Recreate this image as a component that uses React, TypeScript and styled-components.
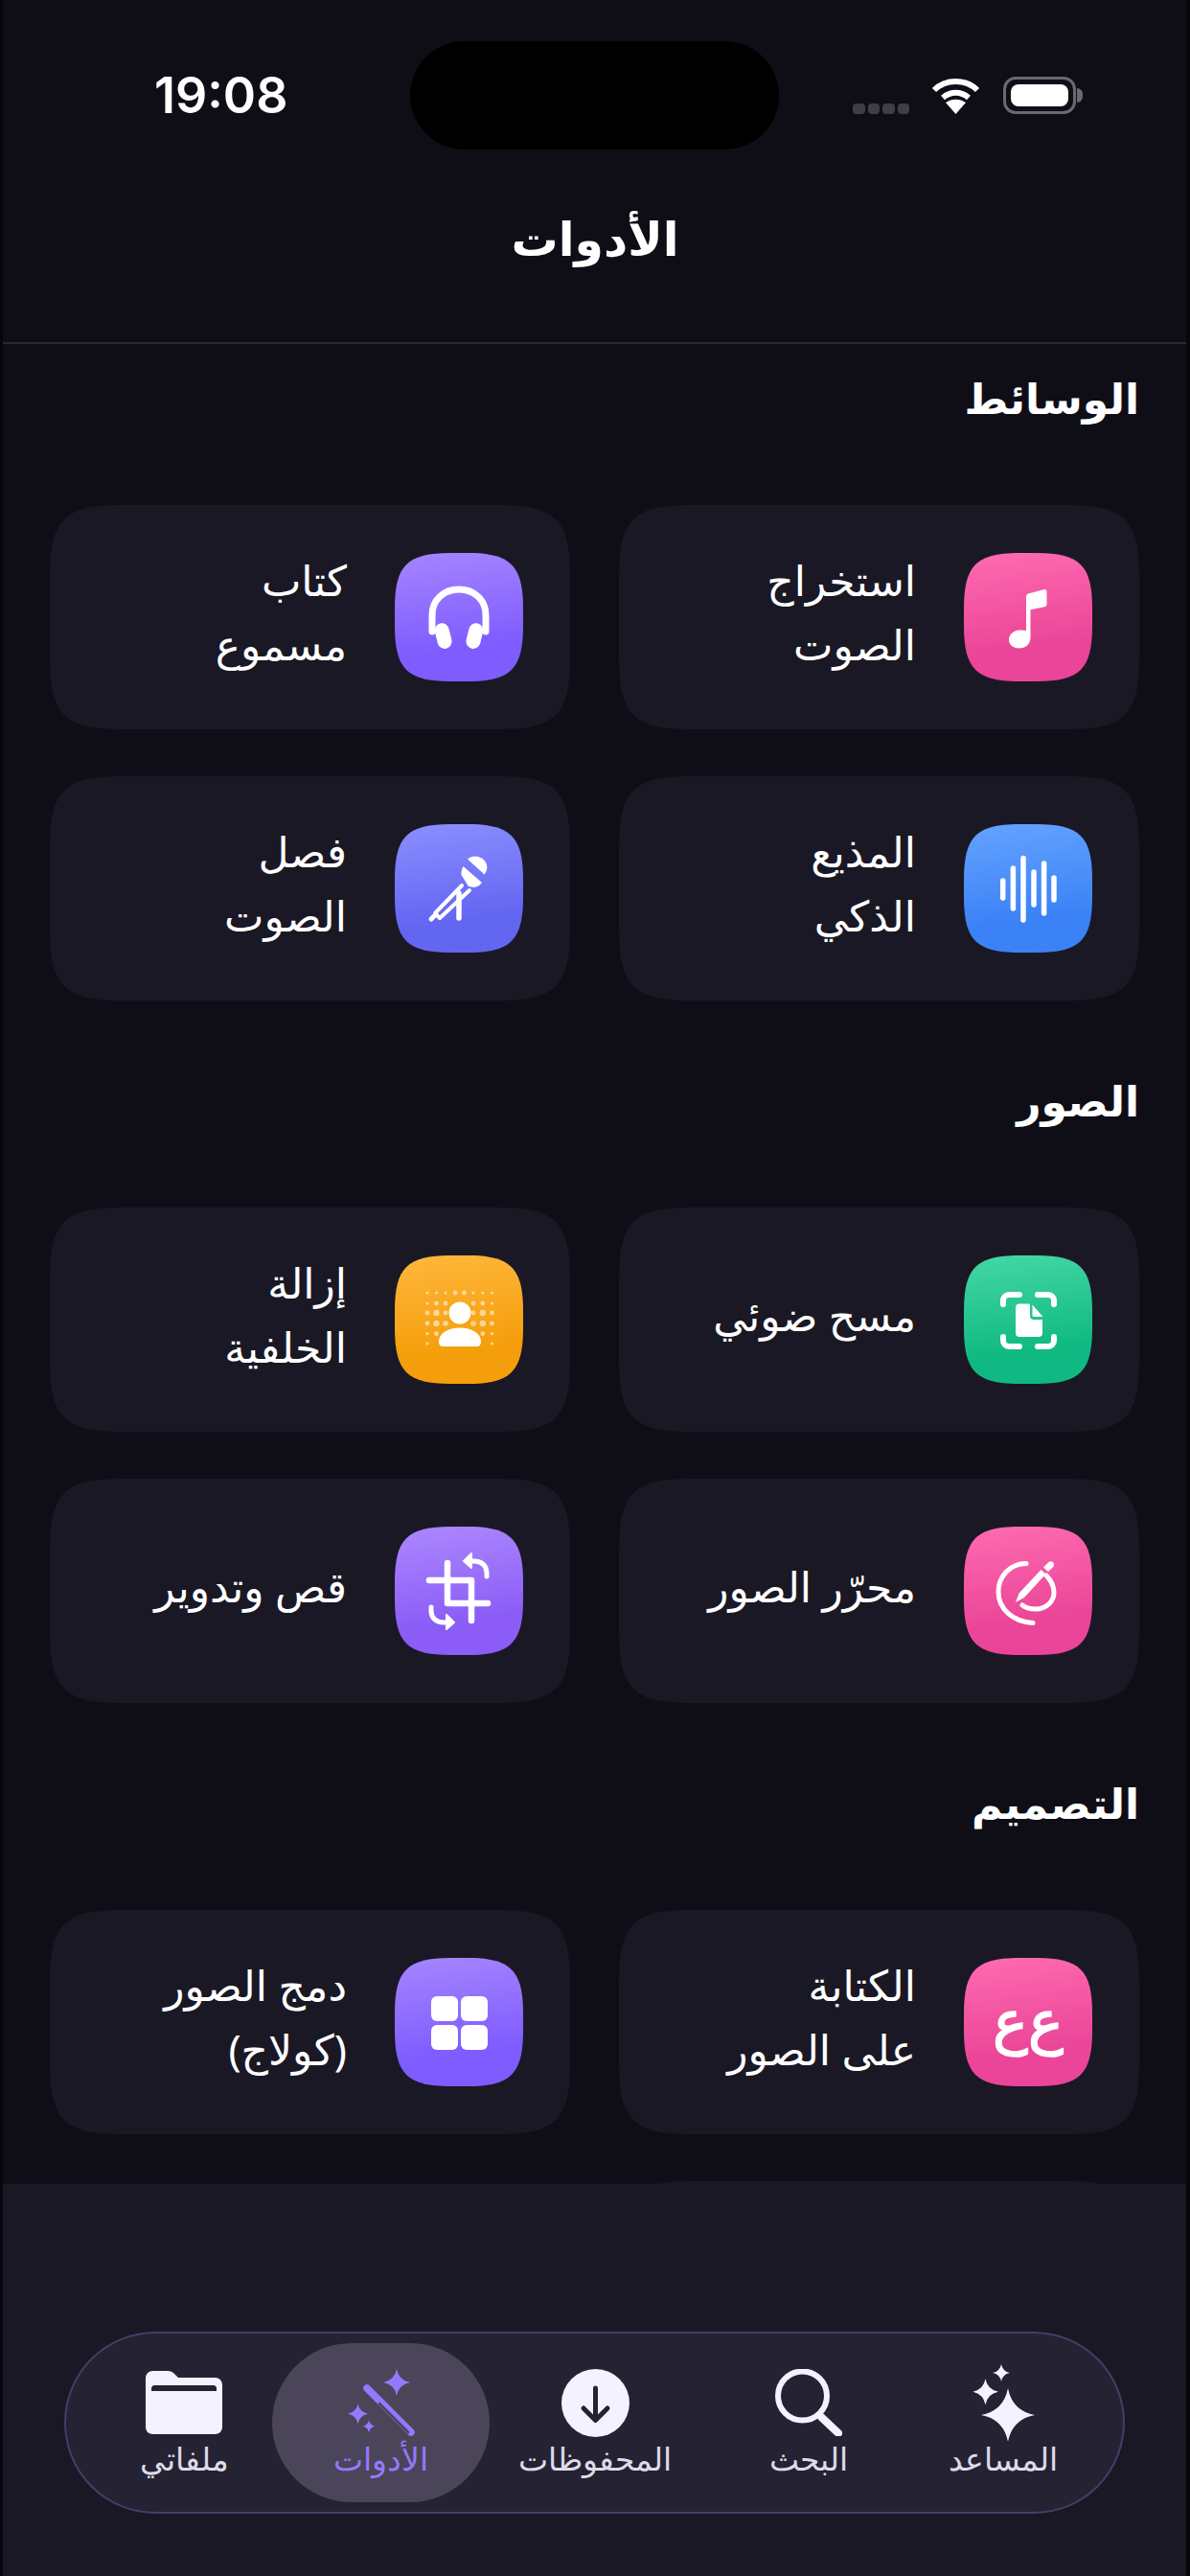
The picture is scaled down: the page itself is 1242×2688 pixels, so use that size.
import { createGlobalStyle, styled } from "styled-components";
import type { ReactNode } from "react";

const GlobalStyle = createGlobalStyle`
  html, body {
    margin: 0;
    padding: 0;
    background: #0f0e17;
  }
  * {
    box-sizing: border-box;
  }
`;

const Screen = styled.div`
  position: relative;
  width: 1242px;
  height: 2688px;
  overflow: hidden;
  background: #0f0e17;
  color: #ffffff;
  font-family: "Noto Sans", "DejaVu Sans", sans-serif;

  /* thin dark rim down both sides of the display */
  &::after {
    content: "";
    position: absolute;
    inset: 0;
    border-left: 3px solid #07070b;
    border-right: 4px solid #07070b;
    pointer-events: none;
  }
`;

const StatusBar = styled.div`
  direction: ltr;
  display: flex;
  align-items: center;
  height: 156px;
  padding: 43px 119px 0 161px;
`;

const Clock = styled.div`
  width: 138px;
  font-family: Inter, sans-serif;
  font-size: 52px;
  font-weight: 600;
  line-height: 113px;
  white-space: nowrap;
`;

const Island = styled.div`
  width: 385px;
  height: 113px;
  margin-left: 129px;
  border-radius: 57px;
  background: #000000;
`;

const StatusIcons = styled.div`
  display: flex;
  align-items: flex-end;
  height: 39px;
  margin-left: auto;
`;

const SignalDots = styled.div`
  display: flex;
  gap: 3px;
  margin-right: 23px;
`;

const SignalDot = styled.span`
  width: 12.5px;
  height: 11px;
  border-radius: 4px;
  background: #3e3d49;
`;

const Battery = styled.div`
  position: relative;
  width: 76px;
  height: 39px;
  margin-left: 24px;
  padding: 5px;
  border: 3px solid #6a6971;
  border-radius: 13px;

  &::before {
    content: "";
    display: block;
    height: 100%;
    border-radius: 8px;
    background: #ffffff;
  }

  &::after {
    content: "";
    position: absolute;
    top: 9px;
    right: -10px;
    width: 6px;
    height: 15px;
    border-radius: 0 6px 6px 0;
    background: #6a6971;
  }
`;

const TitleBar = styled.header`
  display: flex;
  align-items: center;
  justify-content: center;
  height: 203px;
  border-bottom: 2px solid #2a2833;
`;

const Title = styled.h1`
  margin: 0 0 17px;
  font-size: 49px;
  font-weight: 700;
`;

const Content = styled.main`
  padding: 26px 53px 0;
`;

const Section = styled.section`
  & + & {
    margin-top: 74px;
  }
`;

const SectionHeading = styled.h2`
  margin: 0 0 82px;
  font-size: 44px;
  font-weight: 700;
  line-height: 60px;
`;

const ToolGrid = styled.div`
  display: grid;
  grid-template-columns: 543px 543px;
  gap: 49px 51px;
`;

const ToolCard = styled.div`
  display: flex;
  align-items: center;
  gap: 50px;
  height: 234px;
  padding: 0 49px;
  background: #1a1825;
  clip-path: path("M0 75C0 15 15 0 75 0H468C528 0 543 15 543 75V159C543 219 528 234 468 234H75C15 234 0 219 0 159Z");
`;

const ToolTile = styled.div<{ $from: string; $to: string }>`
  flex: none;
  width: 134px;
  height: 134px;
  background: linear-gradient(172deg, ${(p) => p.$from} 0%, ${(p) => p.$to} 72%);
  clip-path: path("M0 58C0 13 13 0 58 0H76C121 0 134 13 134 58V76C134 121 121 134 76 134H58C13 134 0 121 0 76Z");

  svg {
    display: block;
  }
`;

const ToolName = styled.div`
  margin-bottom: 10px;
  font-size: 44px;
  line-height: 67px;
  white-space: pre-line;
`;

const TabArea = styled.div`
  position: absolute;
  left: 0;
  right: 0;
  bottom: 0;
  height: 409px;
  padding: 154px 68px 0 67px;
  background: #1a1824;
`;

const TabBar = styled.nav`
  display: flex;
  align-items: center;
  height: 190px;
  padding: 0 35px 0 31px;
  border: 2px solid #443e66;
  border-radius: 95px;
  background: #252233;
`;

const Tab = styled.div<{ $width: number; $active?: boolean }>`
  display: flex;
  flex-direction: column;
  align-items: center;
  width: ${(p) => p.$width}px;
  height: 166px;
  padding-top: 18px;
  border-radius: 83px;
  background: ${(p) => (p.$active ? "#4a4559" : "transparent")};
  color: ${(p) => (p.$active ? "#9678ff" : "#dedbe8")};
`;

const TabIcon = styled.div`
  display: flex;
  align-items: center;
  justify-content: center;
  height: 88px;
`;

const TabLabel = styled.div`
  margin-top: -3px;
  font-size: 33px;
  font-weight: 300;
  line-height: 36px;
  white-space: nowrap;
`;

const star = (cx: number, cy: number, r: number) => {
  const k = r * 0.16;
  return `M${cx} ${cy - r}Q${cx + k} ${cy - k} ${cx + r} ${cy}Q${cx + k} ${cy + k} ${cx} ${cy + r}Q${cx - k} ${cy + k} ${cx - r} ${cy}Q${cx - k} ${cy - k} ${cx} ${cy - r}Z`;
};

const Glyph = ({ children }: { children: ReactNode }) => (
  <svg width="134" height="134" viewBox="0 0 134 134" fill="none" stroke="#fff" strokeLinecap="round" strokeLinejoin="round">
    {children}
  </svg>
);

const MusicGlyph = () => (
  <Glyph>
    <path
      fill="#fff"
      stroke="none"
      d="M65 46c0-2 1-3.4 3-3.8l15-4c2-.5 3.500.6 3.500 2.500v12.500c0 1.700-.8 2.700-2.500 3l-14.500 3V88c0 7-5 11.500-12 11.500-6 0-10.500-3.700-10.500-9 0-5.500 4.500-9.500 11-10 2.500-.2 5-.1 7 .6z"
    />
  </Glyph>
);

const WaveGlyph = () => (
  <Glyph>
    <path strokeWidth="5.5" d="M40.7 59v18M51.4 46v42M62 35.5V100M73 50v34M83.6 41v52M94 56v23" />
  </Glyph>
);

const HeadphonesGlyph = () => (
  <Glyph>
    <path strokeWidth="7" d="M39 82V65c0-16 12-27 28-27s28 11 28 27v17" />
    <g fill="#fff" stroke="none">
      <rect x="43" y="73" width="15" height="27" rx="7.5" transform="rotate(-14 51 86)" />
      <rect x="76" y="73" width="15" height="27" rx="7.5" transform="rotate(14 83 86)" />
    </g>
  </Glyph>
);

const MicGlyph = () => (
  <Glyph>
    <path fill="#fff" stroke="none" d="M76 36.5a12.5 12.5 0 0 1 20 5.500c1 4-.2 8-2.500 10.500z" />
    <path fill="#fff" stroke="none" d="M71.5 44l19.500 17-3 3c-2 1.800-5.500 2-8 1.500l-3-.5-7.500-12c-.5-3 .5-6.500 2-9z" />
    <path strokeWidth="4" d="M70 64L42 93l5 5 31-29" />
    <path strokeWidth="5.5" d="M67 72v26" />
    <path strokeWidth="5" d="M38 99l3-3" />
  </Glyph>
);

const ScanGlyph = () => (
  <Glyph>
    <path strokeWidth="6" d="M41 51v-4a6 6 0 0 1 6-6h11M77 41h11a6 6 0 0 1 6 6v4M94 85v4a6 6 0 0 1-6 6H77M58 95H47a6 6 0 0 1-6-6v-4" />
    <path fill="#fff" stroke="none" d="M58 50.5h10a1 1 0 0 1 1 1V63a4 4 0 0 0 4 4h9v14a4 4 0 0 1-4 4H58a4 4 0 0 1-4-4V54.5a4 4 0 0 1 4-4z" />
    <path fill="#fff" stroke="none" d="M71.5 51.5L82 63.5a.5.5 0 0 1-.5.5H73a1.5 1.5 0 0 1-1.500-1.500z" />
  </Glyph>
);

const EditGlyph = () => (
  <Glyph>
    <path strokeWidth="5" d="M65 38.5C48 38.500 36 52 36 68c0 17 14 31 36 32.5" />
    <path strokeWidth="5" d="M86 51c5 5 8 11 8 18 0 9-8 17-19 17-5 0-10-1-14-4" />
    <path fill="#fff" stroke="none" d="M88 37.5c1.500-1.500 3.500-1.500 5-.2 1.500 1.400 1.500 3.600 0 5L88 47l-5-4.500zM80.500 45l5 4.500L63 74l-9 5 3.500-9.500z" />
  </Glyph>
);

const dotRows = [39, 50, 60, 71, 81.7, 92];
const dotCols = [34, 43.5, 53, 63, 72.5, 82, 91.8, 101.4];
const dotSizes = [
  [1.6, 1.6, 1.6, 2.4, 2.4, 1.6, 1.6, 1.6],
  [1.6, 2.4, 2.4, 0, 0, 2.4, 2.4, 1.6],
  [2.4, 3.2, 2.4, 0, 0, 2.4, 3.2, 2.4],
  [2.4, 3.2, 2.8, 0, 0, 2.8, 3.2, 2.4],
  [1.6, 2.4, 2, 0, 0, 2, 2.4, 1.6],
  [1.6, 0, 0, 0, 0, 0, 0, 1.6],
];

const CutoutGlyph = () => (
  <Glyph>
    <g fill="#fff" fillOpacity="0.55" stroke="none">
      {dotRows.map((y, row) =>
        dotCols.map((x, col) => <circle key={`${row}-${col}`} cx={x} cy={y} r={dotSizes[row][col]} />),
      )}
    </g>
    <circle cx="68" cy="60" r="11.5" fill="#fff" stroke="none" />
    <path fill="#fff" stroke="none" d="M46 90c0-9 10-14.500 22-14.500S90 81 90 90c0 3-1.500 5-4 5H50c-2.500 0-4-2-4-5z" />
  </Glyph>
);

const CropGlyph = () => (
  <Glyph>
    <path strokeWidth="6.5" d="M55 38v42h42M36 56h44v42" />
    <path strokeWidth="5" d="M96 52v-4c0-7-5-12-13-12h-4" />
    <path fill="#fff" strokeWidth="2" d="M80 28v15l-8-7z" />
    <path strokeWidth="5" d="M38 84v4c0 7 5 12 13 12h4" />
    <path fill="#fff" strokeWidth="2" d="M54 92v15l8-7z" />
  </Glyph>
);

const TypeGlyph = () => (
  <Glyph>
    <text x="67" y="88" fill="#fff" stroke="#fff" strokeWidth="1.5" fontSize="62" textAnchor="middle">
      {"ع\u200cع"}
    </text>
  </Glyph>
);

const CollageGlyph = () => (
  <Glyph>
    <g fill="#fff" stroke="none">
      <rect x="38" y="40" width="28" height="26" rx="6" />
      <rect x="69" y="40" width="28" height="26" rx="6" />
      <rect x="38" y="70" width="28" height="26" rx="6" />
      <rect x="69" y="70" width="28" height="26" rx="6" />
    </g>
  </Glyph>
);

const FolderIcon = () => (
  <svg width="80" height="66" viewBox="0 0 80 66">
    <path fill="#f5f2ff" d="M8 0h15c3 0 5 1 7 3l4 4h38c5 0 8 3 8 8v43c0 5-3 8-8 8H8c-5 0-8-3-8-8V8c0-5 3-8 8-8z" />
    <path fill="#252233" d="M9 15h62c1.500 0 3 1.500 3 3v3H6v-3c0-1.500 1.500-3 3-3z" />
  </svg>
);

const WandIcon = () => (
  <svg width="70" height="70" viewBox="0 0 70 70">
    <g fill="#9678ff">
      <path d={star(51, 14, 14)} />
      <path d={star(10.6, 46.7, 10.5)} />
      <path d={star(22, 59.7, 6.5)} />
    </g>
    <path stroke="#9678ff" strokeWidth="7.5" strokeLinecap="round" d="M20 20L66 66" />
    <path stroke="#4a4559" strokeWidth="2.5" strokeLinecap="round" d="M33 36L63 66" />
  </svg>
);

const DownloadIcon = () => (
  <svg width="71" height="71" viewBox="0 0 71 71">
    <circle cx="35.5" cy="35.5" r="35.5" fill="#f5f2ff" />
    <path fill="none" stroke="#252233" strokeWidth="5" strokeLinecap="round" strokeLinejoin="round" d="M35.5 20v33M23 41l12.500 12.500L48 41" />
  </svg>
);

const SearchIcon = () => (
  <svg width="70" height="70" viewBox="0 0 70 70" fill="none" stroke="#f5f2ff" strokeLinecap="round">
    <circle cx="28.5" cy="28" r="25.5" strokeWidth="6" />
    <path strokeWidth="8" d="M48 50l18 17" />
  </svg>
);

const SparklesIcon = () => (
  <svg width="65" height="80" viewBox="0 0 65 80" fill="#f5f2ff">
    <path d={star(37, 53, 28)} />
    <path d={star(13.5, 28.7, 13.5)} />
    <path d={star(30, 9, 9)} />
  </svg>
);

const sections = [
  {
    title: "الوسائط",
    tools: [
      { name: "استخراج\nالصوت", from: "#ff6bb0", to: "#ea4598", glyph: <MusicGlyph /> },
      { name: "كتاب\nمسموع", from: "#a685ff", to: "#7e5cff", glyph: <HeadphonesGlyph /> },
      { name: "المذيع\nالذكي", from: "#64a3ff", to: "#3b82f6", glyph: <WaveGlyph /> },
      { name: "فصل\nالصوت", from: "#8b8fff", to: "#6366f1", glyph: <MicGlyph /> },
    ],
  },
  {
    title: "الصور",
    tools: [
      { name: "مسح ضوئي", from: "#45d8a6", to: "#10b981", glyph: <ScanGlyph /> },
      { name: "إزالة\nالخلفية", from: "#ffb73c", to: "#f59e0b", glyph: <CutoutGlyph /> },
      { name: "محرّر الصور", from: "#ff6bb0", to: "#ea4598", glyph: <EditGlyph /> },
      { name: "قص وتدوير", from: "#ac88ff", to: "#8b5cf6", glyph: <CropGlyph /> },
    ],
  },
  {
    title: "التصميم",
    tools: [
      { name: "الكتابة\nعلى الصور", from: "#ff6bb0", to: "#ea4598", glyph: <TypeGlyph /> },
      { name: "دمج الصور\n(كولاج)", from: "#a685ff", to: "#7e5cff", glyph: <CollageGlyph /> },
    ],
    // the list scrolls on under the tab bar
    continues: true,
  },
];

const tabs = [
  { label: "المساعد", width: 180, icon: <SparklesIcon /> },
  { label: "البحث", width: 226, icon: <SearchIcon /> },
  { label: "المحفوظات", width: 220, icon: <DownloadIcon /> },
  { label: "الأدوات", width: 227, icon: <WandIcon />, active: true },
  { label: "ملفاتي", width: 184, icon: <FolderIcon /> },
];

export default function App() {
  return (
    <Screen dir="rtl">
      <GlobalStyle />
      <StatusBar>
        <Clock>19:08</Clock>
        <Island />
        <StatusIcons>
          <SignalDots>
            <SignalDot />
            <SignalDot />
            <SignalDot />
            <SignalDot />
          </SignalDots>
          <svg width="51" height="38" viewBox="0 0 51 38" fill="none" stroke="#fff" strokeWidth="6">
            <path d="M3 13C15 1 36 1 48 13" />
            <path d="M12 21c8-7 19-7 27 0" />
            <path fill="#fff" stroke="none" d="M25.5 38L15 26c6-4.500 15-4.500 21 0z" />
          </svg>
          <Battery />
        </StatusIcons>
      </StatusBar>
      <TitleBar>
        <Title>الأدوات</Title>
      </TitleBar>
      <Content>
        {sections.map((section) => (
          <Section key={section.title}>
            <SectionHeading>{section.title}</SectionHeading>
            <ToolGrid>
              {section.tools.map((tool) => (
                <ToolCard key={tool.name}>
                  <ToolTile $from={tool.from} $to={tool.to}>
                    {tool.glyph}
                  </ToolTile>
                  <ToolName>{tool.name}</ToolName>
                </ToolCard>
              ))}
              {section.continues && <ToolCard />}
            </ToolGrid>
          </Section>
        ))}
      </Content>
      <TabArea>
        <TabBar>
          {tabs.map((tab) => (
            <Tab key={tab.label} $width={tab.width} $active={tab.active}>
              <TabIcon>{tab.icon}</TabIcon>
              <TabLabel>{tab.label}</TabLabel>
            </Tab>
          ))}
        </TabBar>
      </TabArea>
    </Screen>
  );
}
